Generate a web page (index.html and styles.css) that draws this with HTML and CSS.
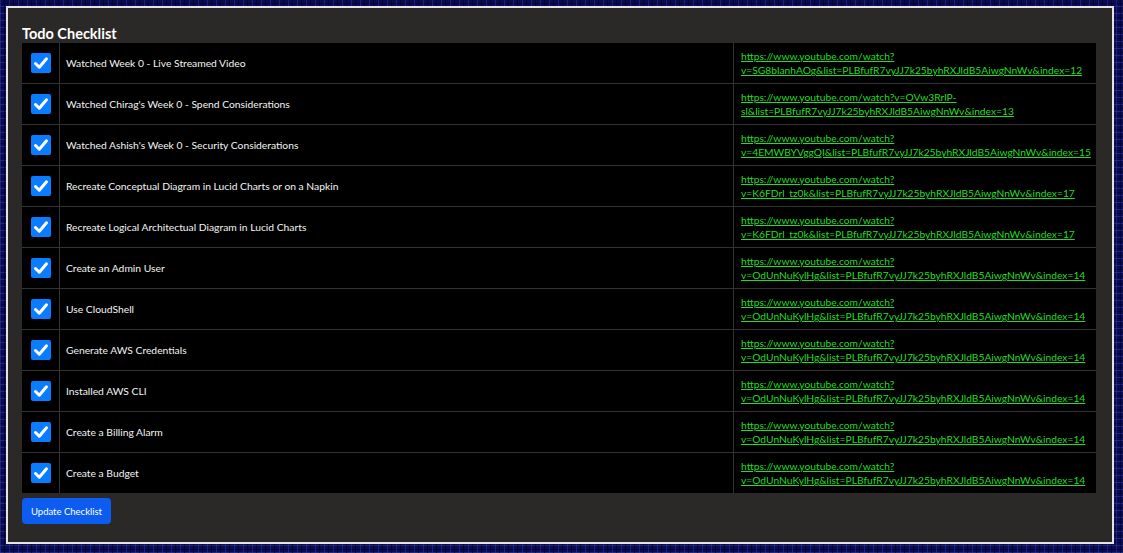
FILE: index.html
```html
<!DOCTYPE html>
<html>
<head>
<meta charset="utf-8">
<link rel="stylesheet" href="styles.css">
</head>
<body>
<div class="panel">
  <h2 class="title">Todo Checklist</h2>
  <table class="todo">
    <tbody>
      <tr><td class="c-check"><span class="box"><svg viewBox="0 0 20 20"><path d="M4.5 10.5 L8.3 14.2 L15.5 5.8"/></svg></span></td><td class="c-text">Watched Week 0 - Live Streamed Video</td><td class="c-link"><a href="#">https://www.youtube.com/watch?<br>v=SG8blanhAOg&amp;list=PLBfufR7vyJJ7k25byhRXJldB5AiwgNnWv&amp;index=12</a></td></tr>
      <tr><td class="c-check"><span class="box"><svg viewBox="0 0 20 20"><path d="M4.5 10.5 L8.3 14.2 L15.5 5.8"/></svg></span></td><td class="c-text">Watched Chirag's Week 0 - Spend Considerations</td><td class="c-link"><a href="#">https://www.youtube.com/watch?v=OVw3RrlP-<br>sl&amp;list=PLBfufR7vyJJ7k25byhRXJldB5AiwgNnWv&amp;index=13</a></td></tr>
      <tr><td class="c-check"><span class="box"><svg viewBox="0 0 20 20"><path d="M4.5 10.5 L8.3 14.2 L15.5 5.8"/></svg></span></td><td class="c-text">Watched Ashish's Week 0 - Security Considerations</td><td class="c-link"><a href="#">https://www.youtube.com/watch?<br>v=4EMWBYVggQI&amp;list=PLBfufR7vyJJ7k25byhRXJldB5AiwgNnWv&amp;index=15</a></td></tr>
      <tr><td class="c-check"><span class="box"><svg viewBox="0 0 20 20"><path d="M4.5 10.5 L8.3 14.2 L15.5 5.8"/></svg></span></td><td class="c-text">Recreate Conceptual Diagram in Lucid Charts or on a Napkin</td><td class="c-link"><a href="#">https://www.youtube.com/watch?<br>v=K6FDrl_tz0k&amp;list=PLBfufR7vyJJ7k25byhRXJldB5AiwgNnWv&amp;index=17</a></td></tr>
      <tr><td class="c-check"><span class="box"><svg viewBox="0 0 20 20"><path d="M4.5 10.5 L8.3 14.2 L15.5 5.8"/></svg></span></td><td class="c-text">Recreate Logical Architectual Diagram in Lucid Charts</td><td class="c-link"><a href="#">https://www.youtube.com/watch?<br>v=K6FDrl_tz0k&amp;list=PLBfufR7vyJJ7k25byhRXJldB5AiwgNnWv&amp;index=17</a></td></tr>
      <tr><td class="c-check"><span class="box"><svg viewBox="0 0 20 20"><path d="M4.5 10.5 L8.3 14.2 L15.5 5.8"/></svg></span></td><td class="c-text">Create an Admin User</td><td class="c-link"><a href="#">https://www.youtube.com/watch?<br>v=OdUnNuKylHg&amp;list=PLBfufR7vyJJ7k25byhRXJldB5AiwgNnWv&amp;index=14</a></td></tr>
      <tr><td class="c-check"><span class="box"><svg viewBox="0 0 20 20"><path d="M4.5 10.5 L8.3 14.2 L15.5 5.8"/></svg></span></td><td class="c-text">Use CloudShell</td><td class="c-link"><a href="#">https://www.youtube.com/watch?<br>v=OdUnNuKylHg&amp;list=PLBfufR7vyJJ7k25byhRXJldB5AiwgNnWv&amp;index=14</a></td></tr>
      <tr><td class="c-check"><span class="box"><svg viewBox="0 0 20 20"><path d="M4.5 10.5 L8.3 14.2 L15.5 5.8"/></svg></span></td><td class="c-text">Generate AWS Credentials</td><td class="c-link"><a href="#">https://www.youtube.com/watch?<br>v=OdUnNuKylHg&amp;list=PLBfufR7vyJJ7k25byhRXJldB5AiwgNnWv&amp;index=14</a></td></tr>
      <tr><td class="c-check"><span class="box"><svg viewBox="0 0 20 20"><path d="M4.5 10.5 L8.3 14.2 L15.5 5.8"/></svg></span></td><td class="c-text">Installed AWS CLI</td><td class="c-link"><a href="#">https://www.youtube.com/watch?<br>v=OdUnNuKylHg&amp;list=PLBfufR7vyJJ7k25byhRXJldB5AiwgNnWv&amp;index=14</a></td></tr>
      <tr><td class="c-check"><span class="box"><svg viewBox="0 0 20 20"><path d="M4.5 10.5 L8.3 14.2 L15.5 5.8"/></svg></span></td><td class="c-text">Create a Billing Alarm</td><td class="c-link"><a href="#">https://www.youtube.com/watch?<br>v=OdUnNuKylHg&amp;list=PLBfufR7vyJJ7k25byhRXJldB5AiwgNnWv&amp;index=14</a></td></tr>
      <tr><td class="c-check"><span class="box"><svg viewBox="0 0 20 20"><path d="M4.5 10.5 L8.3 14.2 L15.5 5.8"/></svg></span></td><td class="c-text">Create a Budget</td><td class="c-link"><a href="#">https://www.youtube.com/watch?<br>v=OdUnNuKylHg&amp;list=PLBfufR7vyJJ7k25byhRXJldB5AiwgNnWv&amp;index=14</a></td></tr>
    </tbody>
  </table>
  <button class="update">Update Checklist</button>
</div>
</body>
</html>
```

FILE: styles.css
```css
html, body {
  margin: 0;
  padding: 0;
}
body {
  width: 1123px;
  height: 553px;
  overflow: hidden;
  font-family: Lato, "Noto Sans", sans-serif;
  background-color: #0b0b52;
  background-image:
    repeating-linear-gradient(90deg, rgba(40,60,170,0.5) 0 1px, transparent 1px 4px, rgba(0,0,30,0.55) 4px 5px, transparent 5px 9px),
    repeating-linear-gradient(0deg, rgba(60,80,190,0.4) 0 1px, transparent 1px 3px, rgba(0,0,40,0.6) 3px 4px, transparent 4px 7px);
  padding: 6px 0 0 6px;
  box-sizing: border-box;
}
.panel {
  width: 1108px;
  height: 538px;
  box-sizing: border-box;
  border: 2px solid #e4e4e4;
  background: #2a2927;
  padding: 0 14px;
  display: flex;
  flex-direction: column;
  align-items: flex-start;
}
.title {
  margin: 16px 0 0 0;
  height: 19px;
  font-size: 14.5px;
  font-weight: 700;
  color: #ffffff;
  line-height: 19px;
}
.todo {
  width: 1074px;
  border-collapse: collapse;
  background: #000;
  table-layout: fixed;
}
.todo td {
  height: 40px;
  border-bottom: 1px solid #333;
  padding: 0;
  vertical-align: middle;
}
.todo tr:last-child td {
  border-bottom: none;
}
.c-check {
  width: 37px;
  border-right: 1px solid #333;
}
.c-text {
  width: 667px;
  padding-left: 6px !important;
  color: #f4f4f4;
  font-size: 10.3px;
  border-right: 1px solid #333;
}
.c-link {
  padding-left: 7px !important;
  font-size: 10.25px;
  line-height: 14px;
}
.c-link a {
  color: #22dd22;
  text-decoration: underline;
}
.box {
  display: block;
  width: 20px;
  height: 20px;
  margin-left: 9px;
  background: #0a7cff;
  border-radius: 2px;
}
.box svg {
  display: block;
  width: 20px;
  height: 20px;
}
.box path {
  fill: none;
  stroke: #ffffff;
  stroke-width: 3px;
  stroke-linecap: round;
  stroke-linejoin: round;
}
.update {
  margin-top: 5px;
  width: 89px;
  height: 26px;
  border: none;
  border-radius: 4px;
  background: #0d5cf0;
  color: #ffffff;
  font-family: Lato, "Noto Sans", sans-serif;
  font-size: 9.5px;
  padding: 0;
}
```
